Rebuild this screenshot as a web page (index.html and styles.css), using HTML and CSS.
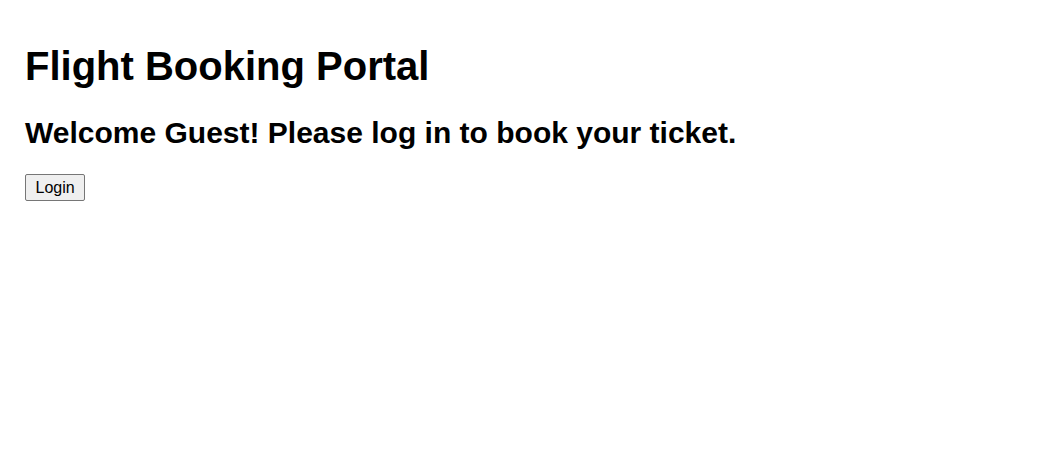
FILE: index.html
```html
<!DOCTYPE html>
<html lang="en">
<head>
<meta charset="utf-8">
<title>Flight Booking Portal</title>
<link rel="stylesheet" href="styles.css">
</head>
<body>
<main class="page">
  <h1 class="title">Flight Booking Portal</h1>
  <h2 class="welcome">Welcome Guest! Please log in to book your ticket.</h2>
  <button class="login-btn" type="button">Login</button>
</main>
</body>
</html>
```

FILE: styles.css
```css
html, body {
  margin: 0;
  padding: 0;
  background: #ffffff;
}

body {
  font-family: "Liberation Sans", Arial, sans-serif;
  color: #000000;
  font-size: 16px;
}

.page {
  padding: 17px 25px;
}

.title {
  font-size: 40px;
  font-weight: bold;
  margin: 26.8px 0;
}

.welcome {
  font-size: 30px;
  font-weight: bold;
  margin: 24.9px 0;
}

.login-btn {
  font-family: "Liberation Sans", Arial, sans-serif;
  font-size: 16px;
  line-height: 19px;
  color: #000000;
  background: #efefef;
  border: 1px solid #767676;
  border-radius: 2px;
  padding: 3px 9.5px;
  margin: 0;
  cursor: pointer;
}
```
